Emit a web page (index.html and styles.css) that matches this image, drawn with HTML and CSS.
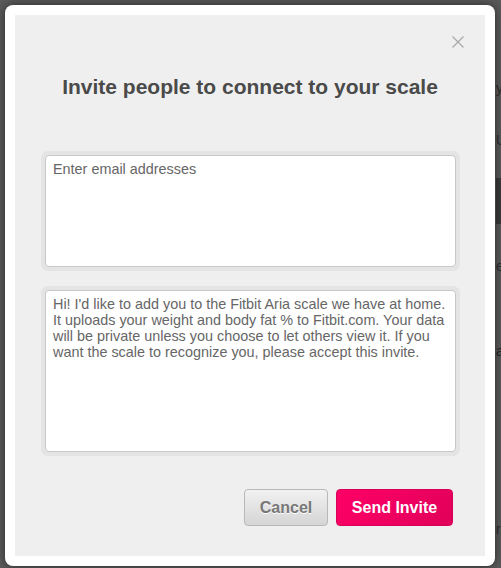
FILE: index.html
```html
<!DOCTYPE html>
<html>
<head>
<meta charset="utf-8">
<link rel="stylesheet" href="styles.css">
</head>
<body>
<div class="page">
  <div class="page-line l1">you</div>
  <div class="page-line l2">Up</div>
  <div class="page-band"></div>
  <div class="page-line l3">en</div>
  <div class="page-line l4">an</div>
  <div class="page-line l5">r v</div>
</div>
<div class="modal">
  <div class="panel">
    <button class="close" aria-label="Close">
      <svg width="12" height="12" viewBox="0 0 12 12"><path d="M0.5 0.5 L11.5 11.5 M11.5 0.5 L0.5 11.5" stroke="#a8a8a8" stroke-width="1.2" fill="none"/></svg>
    </button>
    <h1 class="title">Invite people to connect to your scale</h1>
    <div class="field">
      <textarea class="input emails" placeholder="Enter email addresses"></textarea>
    </div>
    <div class="field">
      <textarea class="input message">Hi! I'd like to add you to the Fitbit Aria scale we have at home. It uploads your weight and body fat % to Fitbit.com. Your data will be private unless you choose to let others view it. If you want the scale to recognize you, please accept this invite.</textarea>
    </div>
    <div class="actions">
      <button class="btn btn-cancel">Cancel</button>
      <button class="btn btn-send">Send Invite</button>
    </div>
  </div>
</div>
</body>
</html>
```
FILE: styles.css
```css
html, body {
  margin: 0;
  padding: 0;
}
body {
  width: 501px;
  height: 568px;
  overflow: hidden;
  background: #5a5a5a;
  font-family: "Liberation Sans", Arial, sans-serif;
  position: relative;
}
.page {
  padding-left: 496px;
  color: #2e2e2e;
  font-size: 14px;
  line-height: 16px;
}
.page-line { white-space: nowrap; }
.l1 { padding-top: 80px; }
.l2 { padding-top: 36px; }
.page-band {
  margin-top: 30px;
  height: 46px;
  background: #3a3a3a;
}
.l3 { margin-top: 34px; }
.l4 { margin-top: 69px; color: #262626; }
.l5 { margin-top: 162px; }

.modal {
  position: absolute;
  left: 5px;
  top: 5px;
  width: 470px;
  height: 541px;
  padding: 10px;
  background: #fff;
  border-radius: 8px;
  box-shadow: 0 0 10px rgba(0,0,0,0.55);
}
.panel {
  position: relative;
  height: 541px;
  box-sizing: border-box;
  background: #efefef;
  padding: 60px 25px 0 26px;
}
.close {
  position: absolute;
  top: 21px;
  right: 21px;
  width: 12px;
  height: 12px;
  padding: 0;
  border: 0;
  background: none;
  display: flex;
}
.title {
  margin: 0 0 52px -1px;
  font-size: 21px;
  line-height: 24px;
  font-weight: bold;
  color: #4a4a4a;
  text-align: center;
}
.field {
  padding: 4px;
  background: #e4e4e4;
  border-radius: 7px;
  margin-bottom: 15px;
  display: flex;
}
.input {
  flex: 1;
  box-sizing: border-box;
  margin: 0;
  border: 1px solid #c8c8c8;
  border-radius: 4px;
  background: #fff;
  padding: 5px 4px 5px 7px;
  font-family: "Liberation Sans", Arial, sans-serif;
  font-size: 14.4px;
  line-height: 16px;
  color: #666;
  resize: none;
  overflow: hidden;
  outline: none;
}
.input::placeholder { color: #666; opacity: 1; }
.emails { height: 112px; }
.message { height: 162px; }
.actions {
  display: flex;
  justify-content: flex-end;
  gap: 8px;
  margin-top: 33px;
  margin-right: 7px;
}
.btn {
  height: 37px;
  padding: 0;
  border-radius: 4px;
  font-family: "Liberation Sans", Arial, sans-serif;
  font-size: 16px;
  font-weight: bold;
  white-space: nowrap;
  cursor: pointer;
}
.btn-cancel {
  width: 84px;
  border: 1px solid #b8b8b8;
  background: linear-gradient(#f1f1f1, #d5d5d5);
  color: #777;
  text-shadow: 0 1px 0 #fff;
}
.btn-send {
  width: 117px;
  border: 1px solid #d8005a;
  background: linear-gradient(135deg, #ff0066, #e0005a);
  color: #fff;
}
```
